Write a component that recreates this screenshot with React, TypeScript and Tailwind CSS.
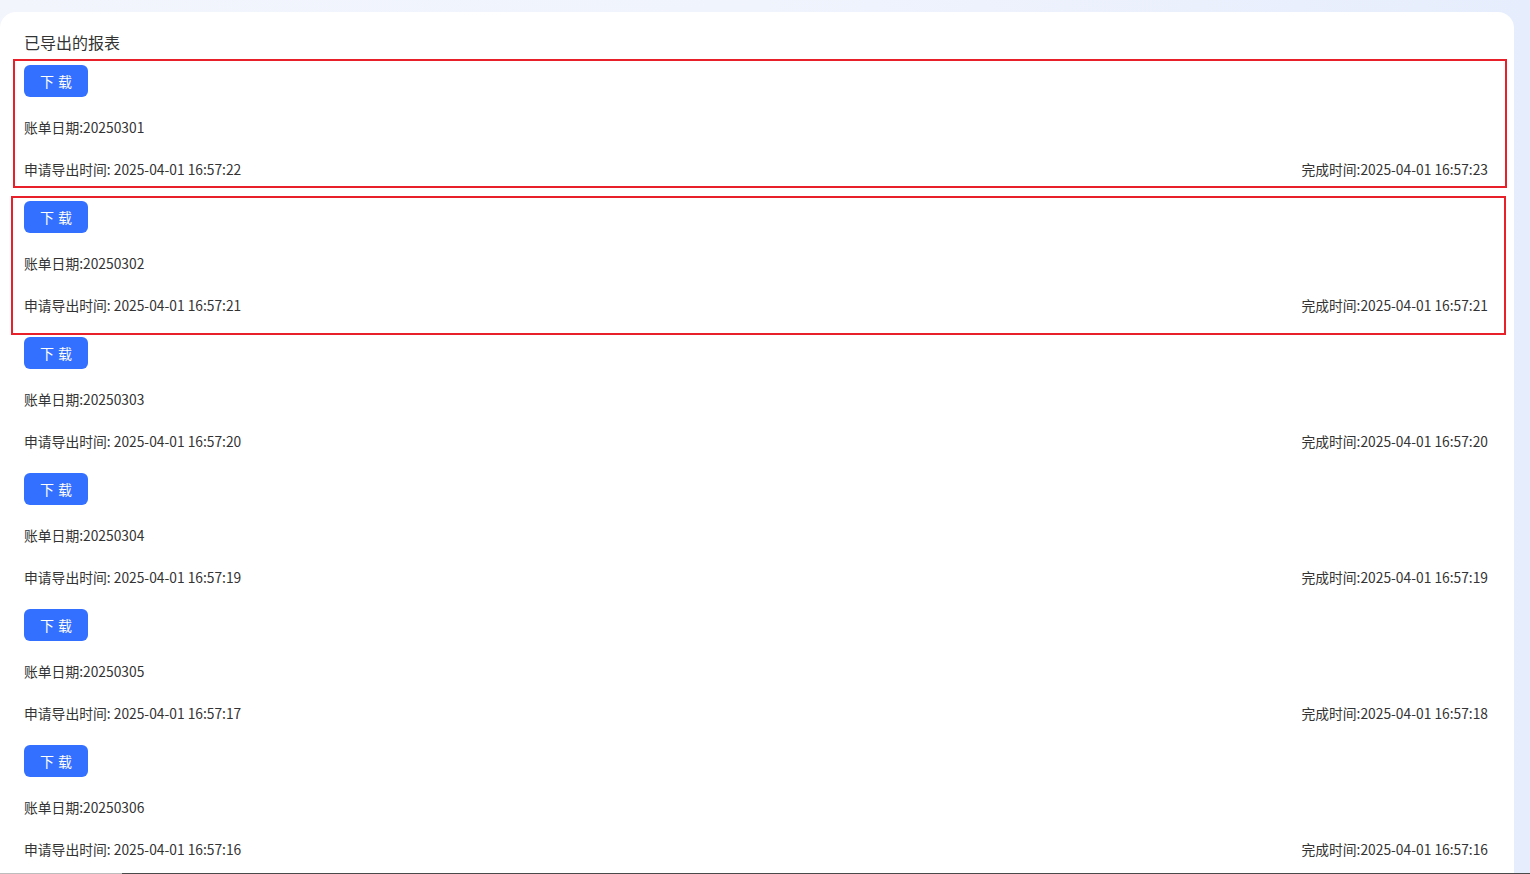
import React from 'react';

type Report = {
  billDate: string;
  requestedAt: string;
  finishedAt: string;
};

const reports: Report[] = [
  { billDate: '20250301', requestedAt: '2025-04-01 16:57:22', finishedAt: '2025-04-01 16:57:23' },
  { billDate: '20250302', requestedAt: '2025-04-01 16:57:21', finishedAt: '2025-04-01 16:57:21' },
  { billDate: '20250303', requestedAt: '2025-04-01 16:57:20', finishedAt: '2025-04-01 16:57:20' },
  { billDate: '20250304', requestedAt: '2025-04-01 16:57:19', finishedAt: '2025-04-01 16:57:19' },
  { billDate: '20250305', requestedAt: '2025-04-01 16:57:17', finishedAt: '2025-04-01 16:57:18' },
  { billDate: '20250306', requestedAt: '2025-04-01 16:57:16', finishedAt: '2025-04-01 16:57:16' },
];

const ReportItem: React.FC<{ report: Report }> = ({ report }) => (
  <div className="flex flex-col h-[136px]">
    <button className="w-16 h-8 rounded-md bg-[#3370ff] text-white text-[14px] tracking-[4px] pl-[4px] flex items-center justify-center">
      下载
    </button>
    <div className="mt-[21px] text-[13.8px] leading-[18px] text-[#333]">账单日期:{report.billDate}</div>
    <div className="mt-6 flex justify-between text-[13.8px] leading-[18px] text-[#333]">
      <span>申请导出时间: {report.requestedAt}</span>
      <span>完成时间:{report.finishedAt}</span>
    </div>
  </div>
);

const App: React.FC = () => {
  return (
    <div
      className="relative h-[874px] w-full overflow-hidden bg-gradient-to-r from-[#f2f5fc] via-[#f0f4fd] to-[#e6edfc] pt-3"
      style={{ fontFamily: '"Microsoft YaHei", "Noto Sans CJK SC", "Noto Sans", sans-serif' }}
    >
      <div className="h-full w-[1514px] rounded-t-2xl bg-white px-6 pt-[21px]">
        <h2 className="text-[16px] leading-[18px] text-[#333]">已导出的报表</h2>
        <div className="mt-[14px] flex flex-col pr-[2px]">
          {reports.map(r => (
            <ReportItem key={r.billDate} report={r} />
          ))}
        </div>
      </div>

      {/* annotation boxes */}
      <div className="pointer-events-none absolute left-[13px] top-[59px] h-[129px] w-[1494px] border-2 border-[#e8202a]" />
      <div className="pointer-events-none absolute left-[11px] top-[196px] h-[139px] w-[1495px] border-2 border-[#e8202a]" />

      <div className="absolute bottom-0 left-0 right-0 flex h-px">
        <div className="w-[122px] bg-[#bdbdbd]" />
        <div className="flex-1 bg-[#4a4a4a]" />
      </div>
    </div>
  );
};

export default App;
